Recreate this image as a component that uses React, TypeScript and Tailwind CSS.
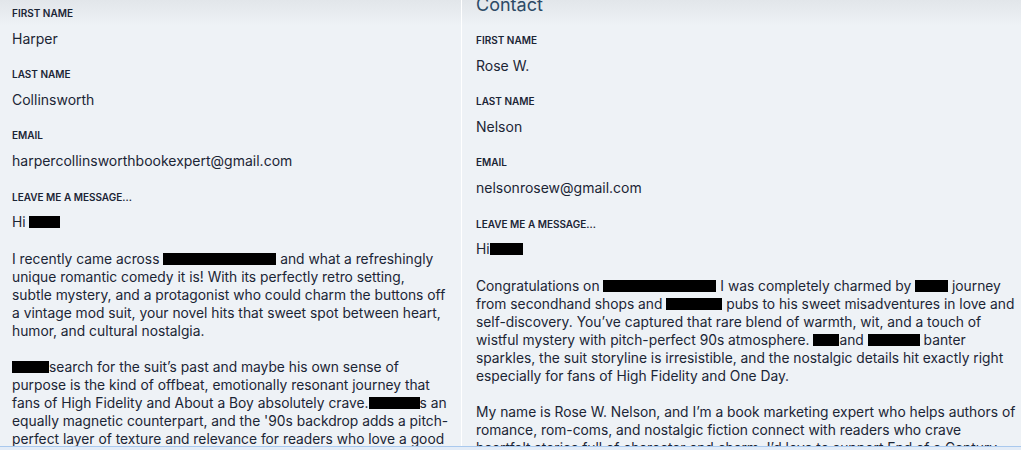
import React from 'react';

const font = { fontFamily: 'Inter, "Noto Sans", sans-serif' };

const Box = ({ w }: { w: number }) => (
  <span className="inline-block h-[12px] bg-black align-[-1px]" style={{ width: w }} />
);

const Field = ({ label, value, first }: { label: string; value: string; first?: boolean }) => (
  <div className={first ? '' : 'mt-[18px]'}>
    <div className="text-[10px] leading-[14px] font-semibold uppercase text-[#1b2535]">{label}</div>
    <div className="mt-[9px] text-[14px] leading-[20px] text-[#1b2535]">{value}</div>
  </div>
);

const Message = ({ children }: { children: React.ReactNode }) => (
  <div className="mt-[19px]">
    <div className="text-[10px] leading-[14px] font-semibold uppercase text-[#1b2535]">Leave me a message...</div>
    <div className="mt-[9px] text-[13.8px] leading-[18px] whitespace-nowrap text-[#1b2535]">{children}</div>
  </div>
);

const Gap = () => <div className="h-[19px]" />;

export default function App() {
  return (
    <div className="w-[1021px] h-[450px] flex flex-col overflow-hidden bg-[#eef2f6]" style={font}>
      <div className="flex h-[446px] overflow-hidden">
        {/* left form */}
        <div className="w-[461px] pl-3 pt-[6px] overflow-hidden bg-[linear-gradient(to_bottom,#e2e6ea,#eef2f6_26px)]">
          <Field first label="First name" value="Harper" />
          <Field label="Last name" value="Collinsworth" />
          <Field label="Email" value="harpercollinsworthbookexpert@gmail.com" />
          <Message>
            <div>Hi <Box w={31} /></div>
            <Gap />
            <div>I recently came across <Box w={113} /> and what a refreshingly</div>
            <div>unique romantic comedy it is! With its perfectly retro setting,</div>
            <div>subtle mystery, and a protagonist who could charm the buttons off</div>
            <div>a vintage mod suit, your novel hits that sweet spot between heart,</div>
            <div>humor, and cultural nostalgia.</div>
            <div className="h-[18px]" />
            <div><Box w={37} />search for the suit’s past and maybe his own sense of</div>
            <div>purpose is the kind of offbeat, emotionally resonant journey that</div>
            <div>fans of High Fidelity and About a Boy absolutely crave.<Box w={51} />s an</div>
            <div>equally magnetic counterpart, and the '90s backdrop adds a pitch-</div>
            <div>perfect layer of texture and relevance for readers who love a good</div>
          </Message>
        </div>
        <div className="w-px bg-white" />
        {/* right form */}
        <div className="flex-1 pl-[14px] overflow-hidden bg-[linear-gradient(to_bottom,#e2e6ea,#eef2f6_26px)]">
          <div className="-mt-[7px] h-[24px] text-[18px] leading-[24px] text-[#2d4a66]">Contact</div>
          <div className="mt-[16px]">
            <Field first label="First name" value="Rose W." />
            <Field label="Last name" value="Nelson" />
            <Field label="Email" value="nelsonrosew@gmail.com" />
            <Message>
              <div>Hi<Box w={33} /></div>
              <Gap />
              <div>Congratulations on <Box w={113} /> I was completely charmed by <Box w={33} /> journey</div>
              <div>from secondhand shops and <Box w={56} /> pubs to his sweet misadventures in love and</div>
              <div>self-discovery. You’ve captured that rare blend of warmth, wit, and a touch of</div>
              <div>wistful mystery with pitch-perfect 90s atmosphere. <Box w={26} />and <Box w={52} /> banter</div>
              <div>sparkles, the suit storyline is irresistible, and the nostalgic details hit exactly right</div>
              <div>especially for fans of High Fidelity and One Day.</div>
              <div className="h-[18px]" />
              <div>My name is Rose W. Nelson, and I’m a book marketing expert who helps authors of</div>
              <div>romance, rom-coms, and nostalgic fiction connect with readers who crave</div>
              <div>heartfelt stories full of character and charm. I’d love to support End of a Century</div>
            </Message>
          </div>
        </div>
      </div>
      <div className="h-px bg-[#a9c9ee]" />
      <div className="h-[3px] bg-[#e3ecf7]" />
    </div>
  );
}
